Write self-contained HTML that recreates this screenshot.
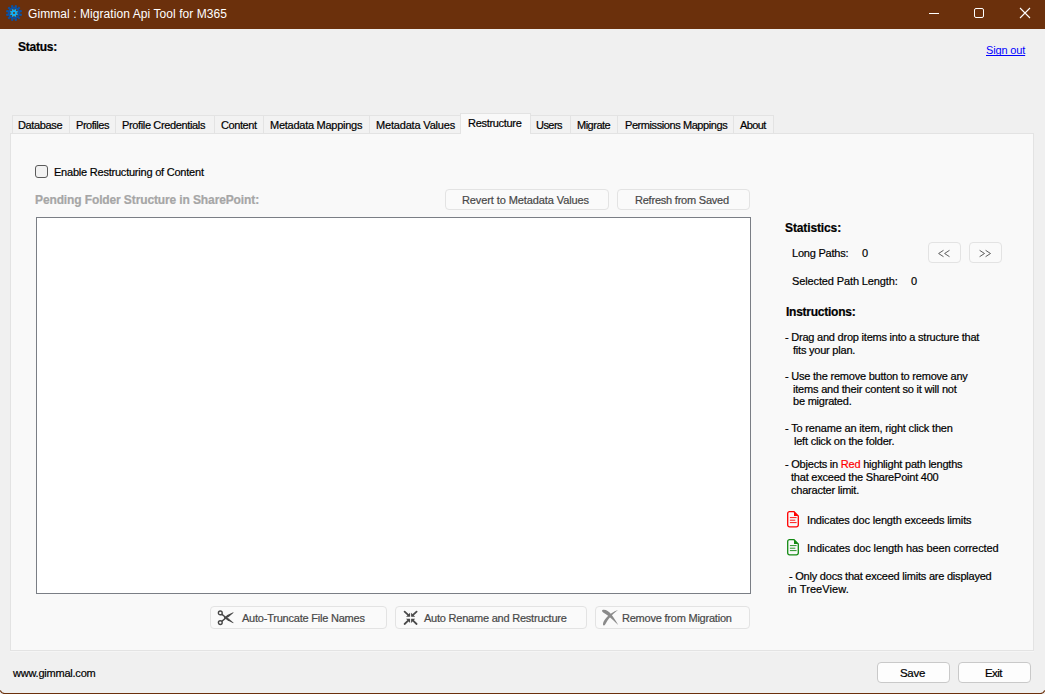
<!DOCTYPE html>
<html><head><meta charset="utf-8"><title>Gimmal : Migration Api Tool for M365</title>
<style>
html,body{margin:0;padding:0;}
body{width:1045px;height:694px;position:relative;overflow:hidden;background:#f0f0f0;font-family:"Liberation Sans",sans-serif;}
.t{position:absolute;white-space:pre;font-family:"Liberation Sans",sans-serif;-webkit-text-stroke:0.2px currentColor;}
.btn{position:absolute;box-sizing:border-box;border:1px solid #e3e3e3;border-radius:4px;background:#fafafa;}
</style></head><body>

<div style="position:absolute;left:0px;top:0px;width:1045px;height:29px;box-sizing:border-box;background:#6b300c;"></div>
<svg style="position:absolute;left:4px;top:4px" width="20" height="20" viewBox="0 0 20 20">
<g transform="translate(10,9)">
<g fill="#0a52a6"><rect x="-1.1" y="-8" width="2.2" height="3" transform="rotate(15)"/><rect x="-1.1" y="-8" width="2.2" height="3" transform="rotate(45)"/><rect x="-1.1" y="-8" width="2.2" height="3" transform="rotate(75)"/><rect x="-1.1" y="-8" width="2.2" height="3" transform="rotate(105)"/><rect x="-1.1" y="-8" width="2.2" height="3" transform="rotate(135)"/><rect x="-1.1" y="-8" width="2.2" height="3" transform="rotate(165)"/><rect x="-1.1" y="-8" width="2.2" height="3" transform="rotate(195)"/><rect x="-1.1" y="-8" width="2.2" height="3" transform="rotate(225)"/><rect x="-1.1" y="-8" width="2.2" height="3" transform="rotate(255)"/><rect x="-1.1" y="-8" width="2.2" height="3" transform="rotate(285)"/><rect x="-1.1" y="-8" width="2.2" height="3" transform="rotate(315)"/><rect x="-1.1" y="-8" width="2.2" height="3" transform="rotate(345)"/>
<circle r="6.1"/></g>
<circle r="4.3" fill="#6b300c"/>
<g fill="#12b0f5"><rect x="-0.8" y="-4.1" width="1.6" height="1.8" transform="rotate(22.5)"/><rect x="-0.8" y="-4.1" width="1.6" height="1.8" transform="rotate(67.5)"/><rect x="-0.8" y="-4.1" width="1.6" height="1.8" transform="rotate(112.5)"/><rect x="-0.8" y="-4.1" width="1.6" height="1.8" transform="rotate(157.5)"/><rect x="-0.8" y="-4.1" width="1.6" height="1.8" transform="rotate(202.5)"/><rect x="-0.8" y="-4.1" width="1.6" height="1.8" transform="rotate(247.5)"/><rect x="-0.8" y="-4.1" width="1.6" height="1.8" transform="rotate(292.5)"/><rect x="-0.8" y="-4.1" width="1.6" height="1.8" transform="rotate(337.5)"/>
<circle r="2.9"/></g>
<circle r="1.0" fill="#6b300c"/>
</g></svg>
<div class="t" style="left:28px;top:8px;font-size:12px;line-height:12px;color:#ffffff;letter-spacing:0.07px;-webkit-text-stroke:0;">Gimmal : Migration Api Tool for M365</div>
<div style="position:absolute;left:929px;top:13px;width:10px;height:1px;box-sizing:border-box;background:#fff;"></div>
<div style="position:absolute;left:974px;top:8px;width:10px;height:10px;box-sizing:border-box;border:1px solid #fff;border-radius:2px;"></div>
<svg style="position:absolute;left:1019px;top:7px" width="12" height="12" viewBox="0 0 12 12">
<path d="M1 1 L11 11 M11 1 L1 11" stroke="#fff" stroke-width="1.1" fill="none"/></svg>
<div class="t" style="left:18px;top:41px;font-size:12px;line-height:12px;font-weight:bold;color:#000;letter-spacing:-0.25px;">Status:</div>
<div class="t" style="left:986px;top:45px;font-size:11px;line-height:11px;color:#0000ff;letter-spacing:-0.15px;text-decoration:underline;text-decoration-skip-ink:none;-webkit-text-stroke:0;">Sign out</div>
<div style="position:absolute;left:10px;top:133px;width:1024px;height:518px;box-sizing:border-box;background:#f9f9f9;border:1px solid #e3e3e3;box-shadow:0 1px 0 #f5f5f5;"></div>
<div style="position:absolute;left:12px;top:115px;width:58px;height:18px;box-sizing:border-box;background:#f2f2f2;border:1px solid #e3e3e3;border-bottom:none;"></div>
<div style="position:absolute;left:69px;top:115px;width:47px;height:18px;box-sizing:border-box;background:#f2f2f2;border:1px solid #e3e3e3;border-bottom:none;"></div>
<div style="position:absolute;left:115px;top:115px;width:100px;height:18px;box-sizing:border-box;background:#f2f2f2;border:1px solid #e3e3e3;border-bottom:none;"></div>
<div style="position:absolute;left:214px;top:115px;width:50px;height:18px;box-sizing:border-box;background:#f2f2f2;border:1px solid #e3e3e3;border-bottom:none;"></div>
<div style="position:absolute;left:263px;top:115px;width:107px;height:18px;box-sizing:border-box;background:#f2f2f2;border:1px solid #e3e3e3;border-bottom:none;"></div>
<div style="position:absolute;left:369px;top:115px;width:92px;height:18px;box-sizing:border-box;background:#f2f2f2;border:1px solid #e3e3e3;border-bottom:none;"></div>
<div style="position:absolute;left:530px;top:115px;width:41px;height:18px;box-sizing:border-box;background:#f2f2f2;border:1px solid #e3e3e3;border-bottom:none;"></div>
<div style="position:absolute;left:570px;top:115px;width:48px;height:18px;box-sizing:border-box;background:#f2f2f2;border:1px solid #e3e3e3;border-bottom:none;"></div>
<div style="position:absolute;left:617px;top:115px;width:117px;height:18px;box-sizing:border-box;background:#f2f2f2;border:1px solid #e3e3e3;border-bottom:none;"></div>
<div style="position:absolute;left:733px;top:115px;width:41px;height:18px;box-sizing:border-box;background:#f2f2f2;border:1px solid #e3e3e3;border-bottom:none;"></div>
<div class="t" style="left:18px;top:120px;font-size:11px;line-height:11px;color:#000;letter-spacing:-0.35px;">Database</div>
<div class="t" style="left:76px;top:120px;font-size:11px;line-height:11px;color:#000;letter-spacing:-0.45px;">Profiles</div>
<div class="t" style="left:122px;top:120px;font-size:11px;line-height:11px;color:#000;letter-spacing:-0.36px;">Profile Credentials</div>
<div class="t" style="left:221px;top:120px;font-size:11px;line-height:11px;color:#000;letter-spacing:-0.41px;">Content</div>
<div class="t" style="left:270px;top:120px;font-size:11px;line-height:11px;color:#000;letter-spacing:-0.26px;">Metadata Mappings</div>
<div class="t" style="left:376px;top:120px;font-size:11px;line-height:11px;color:#000;letter-spacing:-0.18px;">Metadata Values</div>
<div class="t" style="left:536px;top:120px;font-size:11px;line-height:11px;color:#000;letter-spacing:-0.56px;">Users</div>
<div class="t" style="left:577px;top:120px;font-size:11px;line-height:11px;color:#000;letter-spacing:-0.5px;">Migrate</div>
<div class="t" style="left:625px;top:120px;font-size:11px;line-height:11px;color:#000;letter-spacing:-0.42px;">Permissions Mappings</div>
<div class="t" style="left:740px;top:120px;font-size:11px;line-height:11px;color:#000;letter-spacing:-0.6px;">About</div>
<div style="position:absolute;left:460px;top:113px;width:71px;height:21px;box-sizing:border-box;background:#f9f9f9;border:1px solid #e3e3e3;border-bottom:none;"></div>
<div class="t" style="left:468px;top:118px;font-size:11px;line-height:11px;color:#000;letter-spacing:-0.3px;">Restructure</div>
<div style="position:absolute;left:35px;top:165px;width:13px;height:13px;box-sizing:border-box;border:1px solid #5a5a5a;border-radius:3px;background:#f2f2f2;"></div>
<div class="t" style="left:54px;top:167px;font-size:11px;line-height:11px;color:#000;letter-spacing:-0.22px;">Enable Restructuring of Content</div>
<div class="t" style="left:35px;top:194px;font-size:12px;line-height:12px;font-weight:bold;color:#a6a6a6;letter-spacing:-0.12px;">Pending Folder Structure in SharePoint:</div>
<div class="btn" style="left:445px;top:189px;width:164px;height:21px;background:#fafafa;border-color:#e3e3e3;"></div>
<div class="t" style="left:462px;top:195px;font-size:11px;line-height:11px;color:#484848;letter-spacing:-0.1px;">Revert to Metadata Values</div>
<div class="btn" style="left:617px;top:189px;width:133px;height:21px;background:#fafafa;border-color:#e3e3e3;"></div>
<div class="t" style="left:635px;top:195px;font-size:11px;line-height:11px;color:#484848;letter-spacing:-0.22px;">Refresh from Saved</div>
<div style="position:absolute;left:36px;top:217px;width:715px;height:377px;box-sizing:border-box;background:#fff;border:1px solid #7a7e85;"></div>
<div class="t" style="left:785px;top:222px;font-size:12px;line-height:12px;font-weight:bold;color:#000;letter-spacing:-0.12px;">Statistics:</div>
<div class="t" style="left:792px;top:248px;font-size:11px;line-height:11px;color:#000;letter-spacing:-0.22px;">Long Paths:</div>
<div class="t" style="left:862px;top:248px;font-size:11px;line-height:11px;color:#000;letter-spacing:-0.22px;">0</div>
<div class="t" style="left:792px;top:276px;font-size:11px;line-height:11px;color:#000;letter-spacing:-0.12px;">Selected Path Length:</div>
<div class="t" style="left:911px;top:276px;font-size:11px;line-height:11px;color:#000;letter-spacing:-0.22px;">0</div>
<div class="btn" style="left:928px;top:242px;width:33px;height:21px;background:#fafafa;border-color:#e3e3e3;"></div>
<div class="btn" style="left:969px;top:242px;width:33px;height:21px;background:#fafafa;border-color:#e3e3e3;"></div>
<svg style="position:absolute;left:936px;top:248px" width="16" height="11" viewBox="0 0 16 11"><path d="M7.5 2.3 L2.6 5.5 L7.5 8.7 M13.5 2.3 L8.6 5.5 L13.5 8.7" fill="none" stroke="#555" stroke-width="0.95"/></svg>
<svg style="position:absolute;left:977px;top:248px" width="16" height="11" viewBox="0 0 16 11"><path d="M2.6 2.3 L7.5 5.5 L2.6 8.7 M8.6 2.3 L13.5 5.5 L8.6 8.7" fill="none" stroke="#555" stroke-width="0.95"/></svg>
<div class="t" style="left:786px;top:306px;font-size:12px;line-height:12px;font-weight:bold;color:#000;letter-spacing:-0.25px;">Instructions:</div>
<div class="t" style="left:785px;top:332px;font-size:11px;line-height:11px;color:#000;letter-spacing:-0.22px;">- Drag and drop items into a structure that</div>
<div class="t" style="left:793px;top:345px;font-size:11px;line-height:11px;color:#000;letter-spacing:-0.22px;">fits your plan.</div>
<div class="t" style="left:785px;top:371px;font-size:11px;line-height:11px;color:#000;letter-spacing:-0.22px;">- Use the remove button to remove any</div>
<div class="t" style="left:793px;top:384px;font-size:11px;line-height:11px;color:#000;letter-spacing:-0.2px;">items and their content so it will not</div>
<div class="t" style="left:793px;top:396px;font-size:11px;line-height:11px;color:#000;letter-spacing:-0.22px;">be migrated.</div>
<div class="t" style="left:785px;top:423px;font-size:11px;line-height:11px;color:#000;letter-spacing:-0.17px;">- To rename an item, right click then</div>
<div class="t" style="left:794px;top:436px;font-size:11px;line-height:11px;color:#000;letter-spacing:-0.22px;">left click on the folder.</div>
<div class="t" style="left:785px;top:459px;font-size:11px;line-height:11px;color:#000;letter-spacing:-0.22px;">- Objects in <span style="color:#ff0000">Red</span> highlight path lengths</div>
<div class="t" style="left:791px;top:472px;font-size:11px;line-height:11px;color:#000;letter-spacing:-0.22px;">that exceed the SharePoint 400</div>
<div class="t" style="left:791px;top:485px;font-size:11px;line-height:11px;color:#000;letter-spacing:-0.22px;">character limit.</div>
<svg style="position:absolute;left:786px;top:510px" width="14" height="18" viewBox="0 0 14 18">
<path d="M3 1.7 H8 L12.3 6 V15 A1.8 1.8 0 0 1 10.5 16.8 H3.5 A1.8 1.8 0 0 1 1.7 15 V3.5 A1.8 1.8 0 0 1 3.5 1.7 Z" fill="none" stroke="#ff0000" stroke-width="1.3"/>
<path d="M8 1.7 L12.3 6 H8 Z" fill="#ff0000"/>
<path d="M3.9 7.6 H10.6 M3.9 10.2 H9.3 M3.9 12.6 H10.6" stroke="#ff0000" stroke-width="1" opacity="0.9"/>
</svg>
<div class="t" style="left:807px;top:515px;font-size:11px;line-height:11px;color:#000;letter-spacing:-0.16px;">Indicates doc length exceeds limits</div>
<svg style="position:absolute;left:786px;top:538px" width="14" height="18" viewBox="0 0 14 18">
<path d="M3 1.7 H8 L12.3 6 V15 A1.8 1.8 0 0 1 10.5 16.8 H3.5 A1.8 1.8 0 0 1 1.7 15 V3.5 A1.8 1.8 0 0 1 3.5 1.7 Z" fill="none" stroke="#138a13" stroke-width="1.3"/>
<path d="M8 1.7 L12.3 6 H8 Z" fill="#138a13"/>
<path d="M3.9 7.6 H10.6 M3.9 10.2 H9.3 M3.9 12.6 H10.6" stroke="#138a13" stroke-width="1" opacity="0.9"/>
</svg>
<div class="t" style="left:807px;top:543px;font-size:11px;line-height:11px;color:#000;letter-spacing:-0.09px;">Indicates doc length has been corrected</div>
<div class="t" style="left:789px;top:571px;font-size:11px;line-height:11px;color:#000;letter-spacing:-0.22px;">- Only docs that exceed limits are displayed</div>
<div class="t" style="left:788px;top:584px;font-size:11px;line-height:11px;color:#000;letter-spacing:0.1px;">in TreeView.</div>
<div class="btn" style="left:210px;top:606px;width:177px;height:23px;background:#fafafa;border-color:#e3e3e3;"></div>
<svg style="position:absolute;left:212px;top:606px" width="28" height="24" viewBox="0 0 28 24">
<g stroke="#474747" fill="none" stroke-width="1.4">
<circle cx="8.3" cy="6.9" r="1.9"/><circle cx="8.3" cy="16.6" r="1.9"/>
<path d="M9.7 8.1 L13.5 11.2 M9.7 15.4 L13.5 12.3"/>
</g>
<g fill="#474747">
<path d="M12.65 13.17 L16.63 11.02 L21.57 6.65 L21.23 6.15 L15.33 9.12 L11.87 12.01 Z"/>
<path d="M11.86 11.52 L15.38 14.35 L21.24 17.15 L21.56 16.65 L16.64 12.43 L12.62 10.34 Z"/>
</g></svg>
<div class="t" style="left:242px;top:613px;font-size:11px;line-height:11px;color:#484848;letter-spacing:-0.22px;">Auto-Truncate File Names</div>
<div class="btn" style="left:395px;top:606px;width:192px;height:23px;background:#fafafa;border-color:#e3e3e3;"></div>
<svg style="position:absolute;left:400px;top:606px" width="24" height="24" viewBox="0 0 24 24">
<g stroke="#4a4a4a" stroke-width="1.8" stroke-linecap="round" fill="none">
<path d="M4.6 5.6 L8.4 9.2 M16.6 5.6 L12.8 9.2 M4.6 18.0 L8.4 14.4 M16.6 18.0 L12.8 14.4"/></g>
<g fill="#4a4a4a">
<path d="M6.0 10.8 L10.1 10.8 L10.1 6.7 Z M15.2 10.8 L11.1 10.8 L11.1 6.7 Z M6.0 12.8 L10.1 12.8 L10.1 16.9 Z M15.2 12.8 L11.1 12.8 L11.1 16.9 Z"/></g>
</svg>
<div class="t" style="left:424px;top:613px;font-size:11px;line-height:11px;color:#484848;letter-spacing:-0.22px;">Auto Rename and Restructure</div>
<div class="btn" style="left:595px;top:606px;width:155px;height:23px;background:#fafafa;border-color:#e3e3e3;"></div>
<svg style="position:absolute;left:598px;top:606px" width="24" height="24" viewBox="0 0 24 24">
<g fill="#8a8a8a">
<path d="M4.4 4.0 C7.5 3.2 10.5 5.0 13 8 C15.5 11 18 15 20.2 19 C17 15.8 14 12.8 11 10.4 C8.5 8.4 5.5 7.2 4.4 5.8 C4.0 5.0 4.0 4.3 4.4 4.0 Z"/>
<path d="M5 18.8 C4.8 16.5 6 14 9 11 C12 8 15.5 5.5 20 4 C16.5 6.5 13.5 9.5 11 12.5 C9 15 8 17 7 18.8 C6.5 19.6 5.2 19.6 5 18.8 Z"/>
</g></svg>
<div class="t" style="left:622px;top:613px;font-size:11px;line-height:11px;color:#484848;letter-spacing:-0.22px;">Remove from Migration</div>
<div class="t" style="left:13px;top:668px;font-size:11px;line-height:11px;color:#000;letter-spacing:-0.22px;">www.gimmal.com</div>
<div class="btn" style="left:877px;top:662px;width:73px;height:21px;background:#fdfdfd;border-color:#c9c9c9;"></div>
<div class="t" style="left:900px;top:668px;font-size:11.5px;line-height:11.5px;color:#000;letter-spacing:-0.3px;">Save</div>
<div class="btn" style="left:958px;top:662px;width:73px;height:21px;background:#fdfdfd;border-color:#c9c9c9;"></div>
<div class="t" style="left:985px;top:668px;font-size:11.5px;line-height:11.5px;color:#000;letter-spacing:-0.6px;">Exit</div>
<svg style="position:absolute;left:0;top:684px" width="1045" height="10" viewBox="0 0 1045 10">
<path d="M0 9.2 V10 H1045 V9.2 Z" fill="#f0f0f0"/>
<path d="M0.3 6.5 Q1.2 9.5 4.5 9.5 H1040.5 Q1043.8 9.5 1044.7 6.5" fill="none" stroke="#6b300c" stroke-width="1.1"/>
</svg>
</body></html>
